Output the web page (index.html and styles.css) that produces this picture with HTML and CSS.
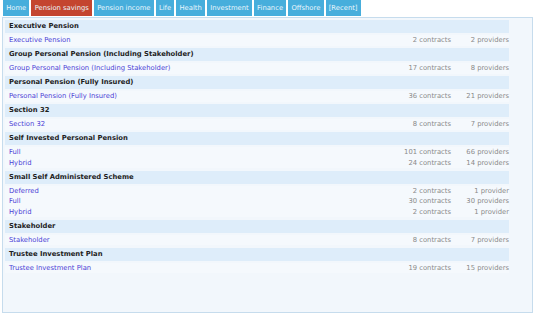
FILE: index.html
```html
<!DOCTYPE html>
<html lang="en">

<head>
    <meta charset="UTF-8">
    <title>Pension savings</title>
    <link rel="stylesheet" href="styles.css">
</head>

<body>
    <ul class="tabs">
        <li class="tab">Home</li>
        <li class="tab active">Pension savings</li>
        <li class="tab">Pension income</li>
        <li class="tab">Life</li>
        <li class="tab">Health</li>
        <li class="tab">Investment</li>
        <li class="tab">Finance</li>
        <li class="tab">Offshore</li>
        <li class="tab">[Recent]</li>
    </ul>

    <div class="panel">
        <div class="section">
            <div class="section-title">Executive Pension</div>
            <ul class="items">
                <li class="item"><a href="#">Executive Pension</a><span class="contracts">2 contracts</span><span class="providers">2 providers</span></li>
            </ul>
        </div>
        <div class="section">
            <div class="section-title">Group Personal Pension (Including Stakeholder)</div>
            <ul class="items">
                <li class="item"><a href="#">Group Personal Pension (Including Stakeholder)</a><span class="contracts">17 contracts</span><span class="providers">8 providers</span></li>
            </ul>
        </div>
        <div class="section">
            <div class="section-title">Personal Pension (Fully Insured)</div>
            <ul class="items">
                <li class="item"><a href="#">Personal Pension (Fully Insured)</a><span class="contracts">36 contracts</span><span class="providers">21 providers</span></li>
            </ul>
        </div>
        <div class="section">
            <div class="section-title">Section 32</div>
            <ul class="items">
                <li class="item"><a href="#">Section 32</a><span class="contracts">8 contracts</span><span class="providers">7 providers</span></li>
            </ul>
        </div>
        <div class="section">
            <div class="section-title">Self Invested Personal Pension</div>
            <ul class="items">
                <li class="item"><a href="#">Full</a><span class="contracts">101 contracts</span><span class="providers">66 providers</span></li>
                <li class="item"><a href="#">Hybrid</a><span class="contracts">24 contracts</span><span class="providers">14 providers</span></li>
            </ul>
        </div>
        <div class="section">
            <div class="section-title">Small Self Administered Scheme</div>
            <ul class="items">
                <li class="item"><a href="#">Deferred</a><span class="contracts">2 contracts</span><span class="providers">1 provider</span></li>
                <li class="item"><a href="#">Full</a><span class="contracts">30 contracts</span><span class="providers">30 providers</span></li>
                <li class="item"><a href="#">Hybrid</a><span class="contracts">2 contracts</span><span class="providers">1 provider</span></li>
            </ul>
        </div>
        <div class="section">
            <div class="section-title">Stakeholder</div>
            <ul class="items">
                <li class="item"><a href="#">Stakeholder</a><span class="contracts">8 contracts</span><span class="providers">7 providers</span></li>
            </ul>
        </div>
        <div class="section">
            <div class="section-title">Trustee Investment Plan</div>
            <ul class="items">
                <li class="item"><a href="#">Trustee Investment Plan</a><span class="contracts">19 contracts</span><span class="providers">15 providers</span></li>
            </ul>
        </div>
    </div>
</body>

</html>
```

FILE: styles.css
```css
body {
    margin: 0;
    padding: 0 1px 2px 2px;
    font-family: "DejaVu Sans", Verdana, sans-serif;
    font-size: 6.8px;
    background: #fff;
    color: #222;
}

.tabs {
    display: flex;
    gap: 2px;
    list-style: none;
    margin: 0 0 1px 1px;
    padding: 0;
    height: 16px;
}

.tab {
    display: flex;
    align-items: center;
    padding: 0 3.2px;
    font-size: 6.8px;
    background: #47aedc;
    color: #eaf6fc;
}

.tab.active {
    background: #c4452f;
}

.panel {
    height: 292px;
    border: 1px solid #c6dced;
    background: #f2f7fc;
    padding: 2px 23px 0 2px;
}

.section-title {
    height: 13px;
    line-height: 13px;
    padding-left: 4px;
    background: #deedfa;
    font-weight: bold;
    color: #1e1e1e;
}

.items {
    list-style: none;
    margin: 0;
    padding: 2px 0 2.5px;
}

.item {
    display: flex;
    height: 10.5px;
    line-height: 10.5px;
    padding-left: 4px;
    background: #f5f9fd;
}

.item a {
    flex: 1;
    color: #4b3fd6;
    text-decoration: none;
}

.contracts,
.providers {
    color: #8a8a8a;
    text-align: right;
}

.contracts {
    width: 60px;
}

.providers {
    width: 58px;
}
```
